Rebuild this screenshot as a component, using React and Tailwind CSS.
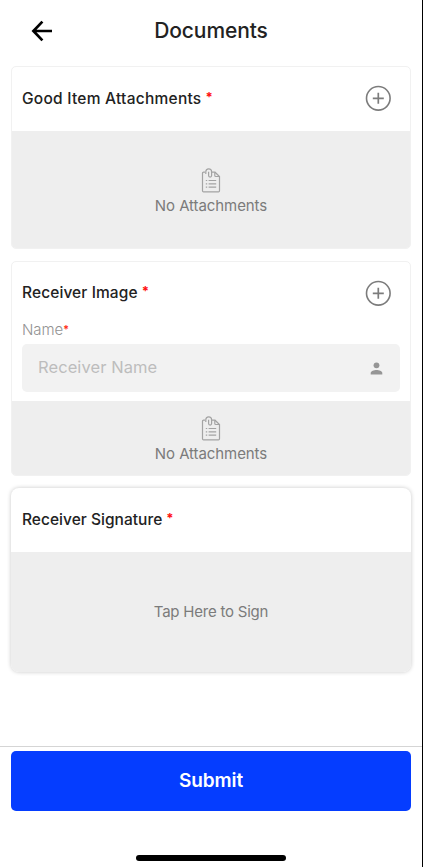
import React from 'react';

function BackArrow() {
  return (
    <svg width="22" height="22" viewBox="0 0 22 22" fill="none" stroke="#000" strokeWidth="2.7">
      <path d="M11.4 1.6 2.4 11l9 9.4M2.4 11H21" />
    </svg>
  );
}

function AddButton() {
  return (
    <button aria-label="Add" className="size-[26px]">
      <svg width="26" height="26" viewBox="0 0 26 26" fill="none" stroke="#7c7c7c" strokeWidth="1.6">
        <circle cx="13.3" cy="13.3" r="11.8" />
        <path d="M13.3 7.8v11M7.8 13.3h11" strokeWidth="1.7" />
      </svg>
    </button>
  );
}

function DocumentIcon() {
  return (
    <svg width="20" height="26" viewBox="0 0 20 26" fill="none" stroke="#a3a3a3" strokeWidth="1.2">
      <path d="M4 4.2H2.6Q1.5 4.2 1.5 5.3v17.4q0 1.1 1.1 1.1h14.8q1.1 0 1.1-1.1V8.5L14 4.2H10.6" />
      <path d="M13.8 4.2v3.2q0 1.1 1.1 1.1h3.4" />
      <path d="M4.8 6V3.8a2.9 2.9 0 0 1 5.8 0v3.8a1.5 1.5 0 0 1-3 0V3.8" />
      <path d="M7.6 12.5h7.6M7.6 15.8h7.6M7.6 19.1h7.6" />
      <path d="M4.8 12.5h1.4M4.8 15.8h1.4M4.8 19.1h1.4" />
    </svg>
  );
}

function CardHeader({ title, className, titleClass, action }) {
  return (
    <div className={`flex h-16 shrink-0 items-center justify-between pr-[19px] ${className}`}>
      <h2 className={`flex text-[15.5px] leading-5 font-medium whitespace-nowrap text-[#222] ${titleClass}`}>
        {title}
        <span className="ml-1 text-[13px] leading-[17px] font-bold tracking-normal text-[#ff1010]">*</span>
      </h2>
      {action}
    </div>
  );
}

function EmptyState({ className }) {
  return (
    <div className={`flex flex-col items-center bg-[#eee] ${className}`}>
      <DocumentIcon />
      <p className="mt-0.5 text-[15px] leading-5 tracking-[-0.08px] whitespace-nowrap text-[#7b7b7b]">No Attachments</p>
    </div>
  );
}

export default function App() {
  return (
    <div className="flex h-[867px] w-[423px] flex-col overflow-hidden border-r border-black bg-white font-['Inter',sans-serif]">
      <header className="grid h-[66px] shrink-0 grid-cols-[80px_1fr_80px] items-center pb-1">
        <button aria-label="Back" className="ml-[31px] size-[22px]"><BackArrow /></button>
        <h1 className="text-center text-[21px] leading-7 font-medium tracking-[-0.1px] text-[#222]">Documents</h1>
      </header>

      <main className="flex flex-1 flex-col px-[11px]">
        <section className="flex h-[183px] shrink-0 flex-col overflow-hidden rounded-[5px] border border-[#f1f1f1]">
          <CardHeader title="Good Item Attachments" className="pb-0.5 pl-2.5" titleClass="pt-px tracking-[0.25px]" action={<AddButton />} />
          <EmptyState className="flex-1 pt-[37px]" />
        </section>

        <section className="mt-3 flex h-[215px] shrink-0 flex-col overflow-hidden rounded-[5px] border border-[#f1f1f1]">
          <CardHeader title="Receiver Image" className="pb-0.5 pl-2.5" titleClass="tracking-[0.1px]" action={<AddButton />} />
          <div className="h-[75px] shrink-0 px-2.5">
            <label className="flex h-[18px] text-[15px] leading-[8px] font-light tracking-[-0.1px] text-[#929292]">
              Name<span className="text-[11px] leading-[7px] font-bold text-[#ff3320]">*</span>
            </label>
            <div className="flex h-12 items-center justify-between rounded-[5px] bg-[#f2f2f2] px-4">
              <span className="pb-0.5 text-[16.5px] leading-5 tracking-[0.08px] text-[#bdbdbd]">Receiver Name</span>
              <svg className="mr-px" width="13" height="13" viewBox="0 0 13 13" fill="#969696">
                <circle cx="6.5" cy="3.3" r="2.9" />
                <path d="M.7 12.4v-1.3C.7 9 4 8 6.5 8s5.8 1 5.8 3.1v1.3z" />
              </svg>
            </div>
          </div>
          <EmptyState className="flex-1 pt-[15px]" />
        </section>

        <section className="mt-3 flex h-[184px] shrink-0 flex-col overflow-hidden rounded-lg shadow-[0_0_4px_rgba(0,0,0,0.22)]">
          <CardHeader title="Receiver Signature" className="pl-[11px]" titleClass="tracking-[0.03px]" />
          <button className="flex flex-1 items-center justify-center bg-[#eee] pb-px text-[15px] leading-5 tracking-[-0.22px] text-[#7b7b7b]">Tap Here to Sign</button>
        </section>
      </main>

      <footer className="flex h-[121px] shrink-0 flex-col items-center border-t border-[#d5d5d5] px-[11px] pt-1">
        <button className="h-[60px] w-full shrink-0 rounded-[5px] bg-[#053dff] text-[19px] leading-6 font-semibold tracking-[-0.1px] text-white">Submit</button>
        <div className="mt-[43.5px] h-1.5 w-[150px] shrink-0 rounded-full bg-black" />
      </footer>
    </div>
  );
}
